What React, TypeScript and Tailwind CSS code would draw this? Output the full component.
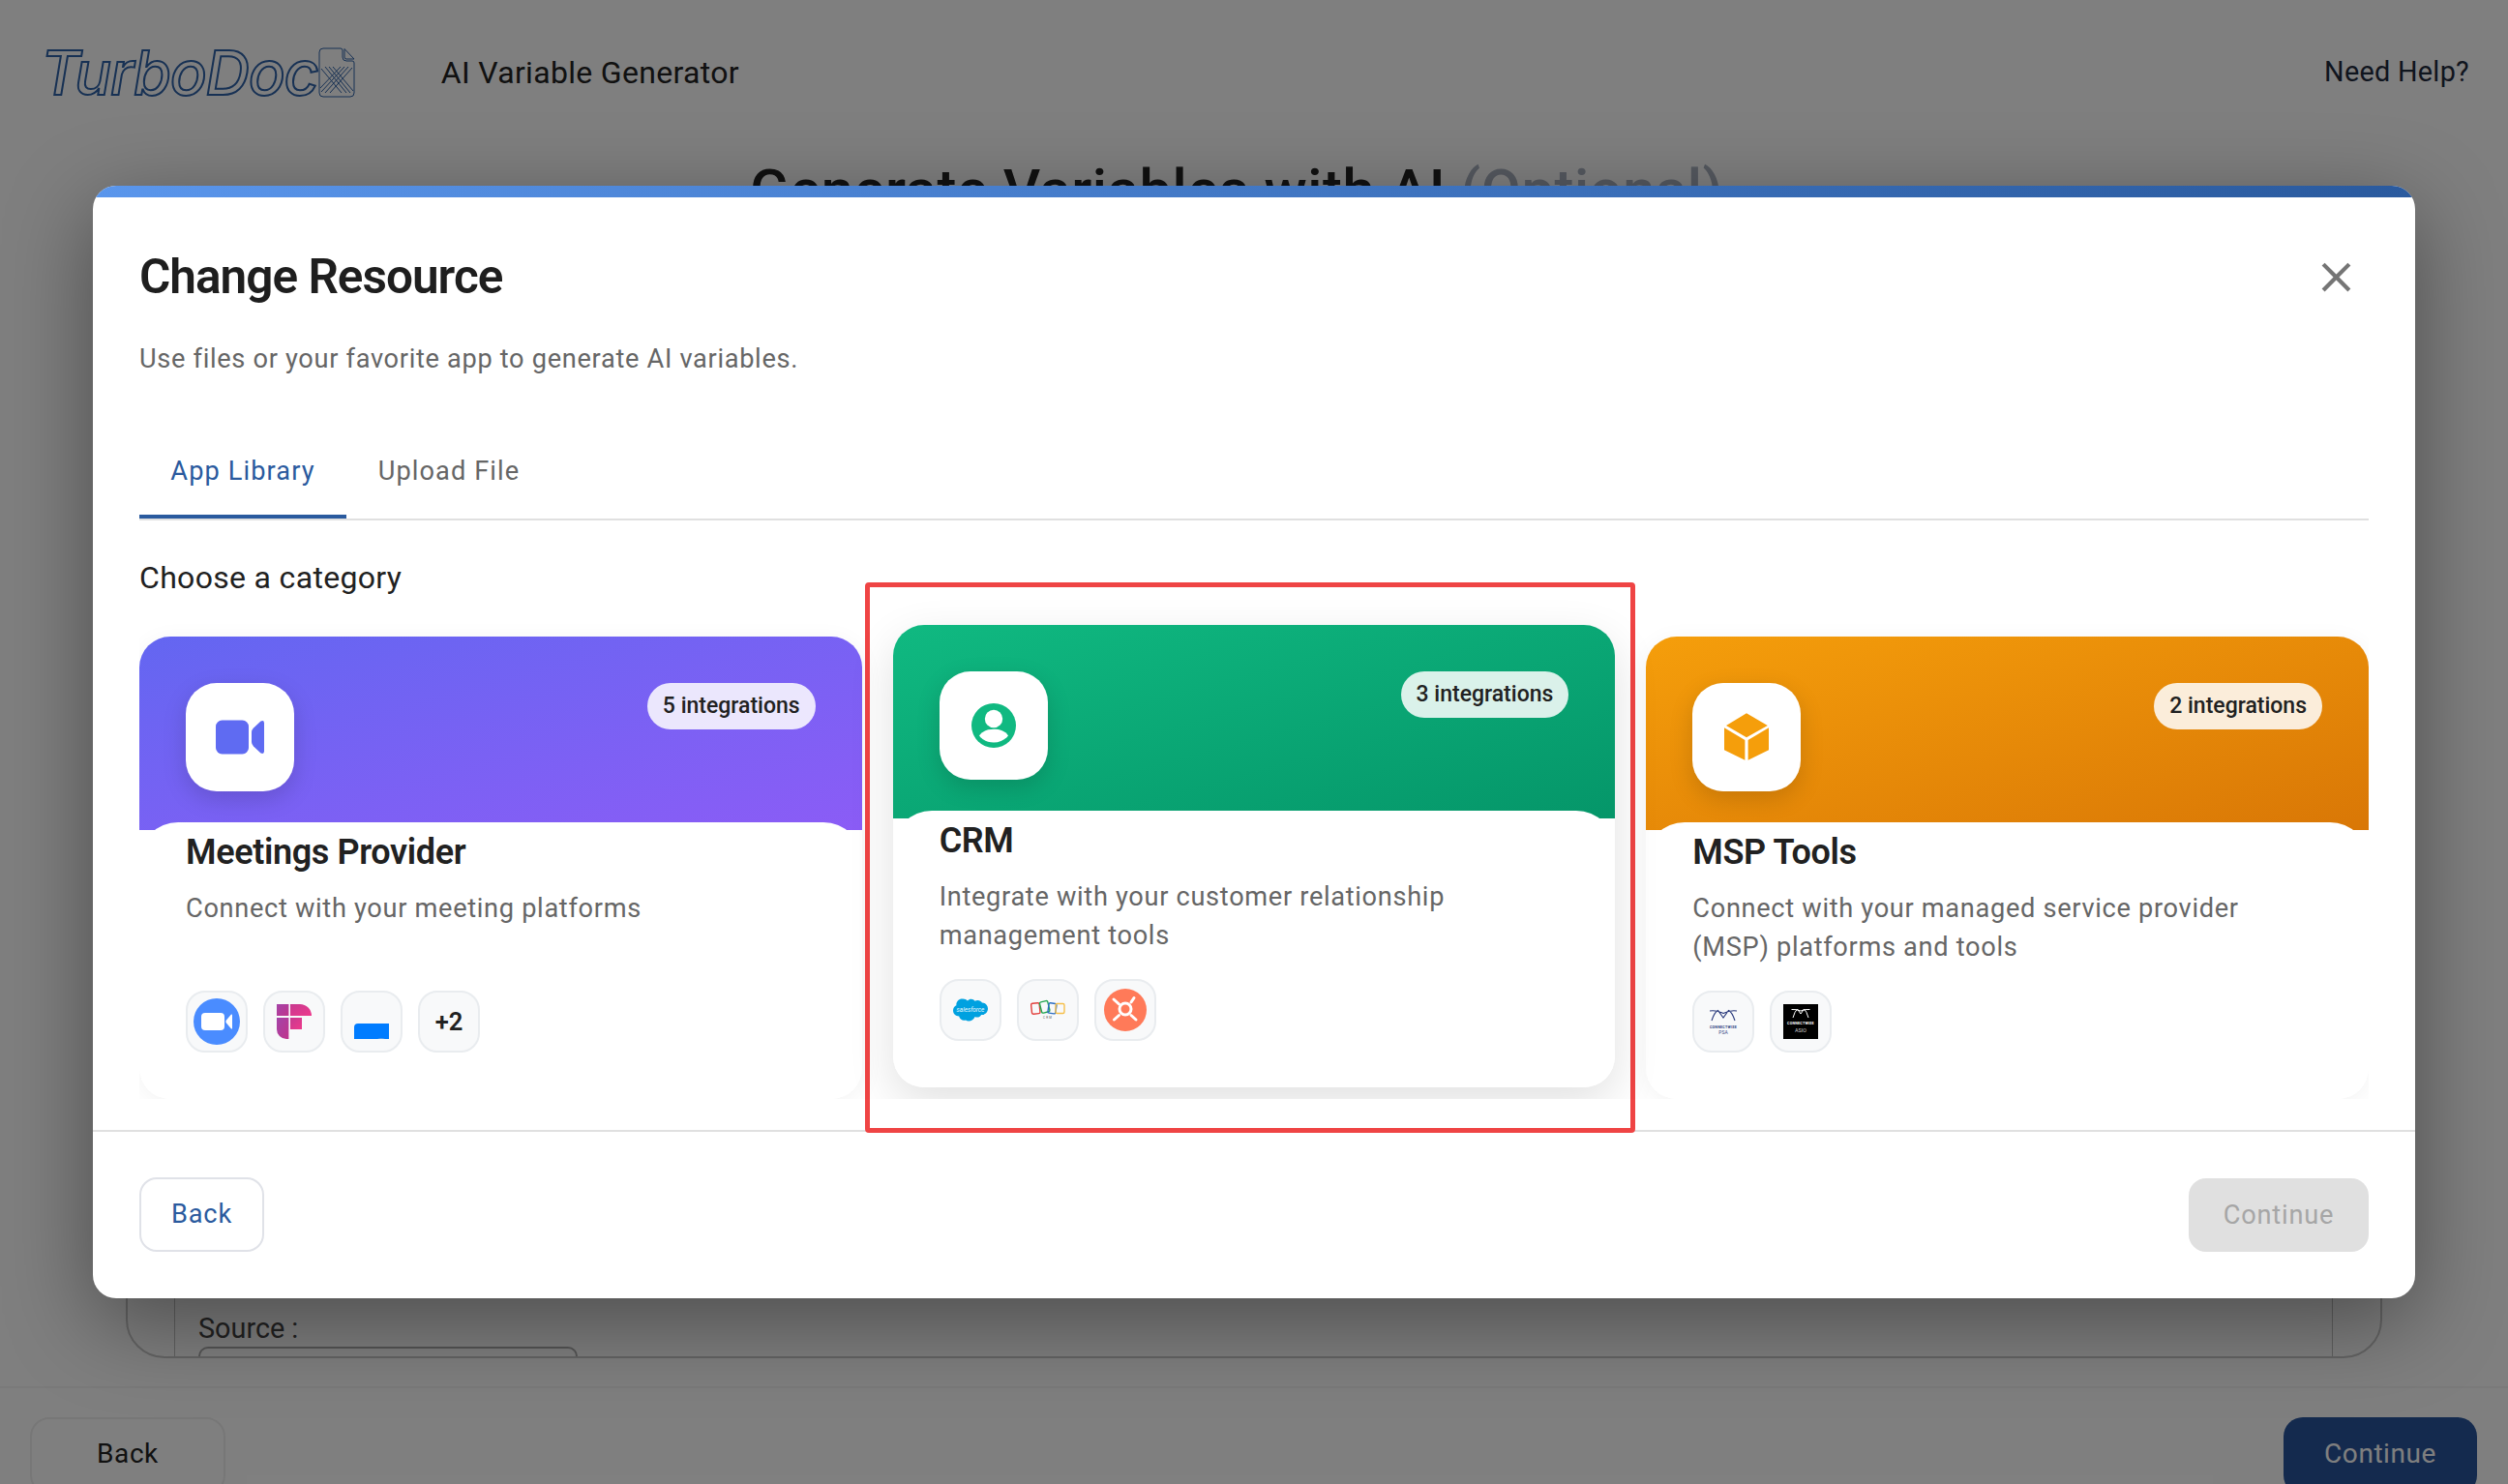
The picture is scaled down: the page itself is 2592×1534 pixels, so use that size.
import React from "react";

function Chip({ children }: { children: React.ReactNode }) {
  return (
    <div className="flex h-16 w-16 shrink-0 items-center justify-center rounded-[20px] border-2 border-[#e9ecef] bg-[#f8f9fa]">
      {children}
    </div>
  );
}

function ZoomLogo() {
  return (
    <svg width="48" height="48" viewBox="0 0 48 48">
      <circle cx="24" cy="24" r="24" fill="#4a8cff" />
      <rect x="8" y="15" width="24" height="18" rx="4" fill="#fff" />
      <path d="M33.5 23 L39 16.5 Q40 16 40 17.5 V30.5 Q40 32 39 31.5 L33.5 25 Z" fill="#fff" />
    </svg>
  );
}

function FirefliesLogo() {
  return (
    <svg width="36" height="36" viewBox="0 0 36 36">
      <defs>
        <linearGradient id="ff1" x1="0" y1="0" x2="1" y2="1">
          <stop offset="0" stopColor="#a444a8" />
          <stop offset="1" stopColor="#c0348c" />
        </linearGradient>
        <linearGradient id="ff2" x1="0" y1="0" x2="1" y2="1">
          <stop offset="0" stopColor="#c73a90" />
          <stop offset="1" stopColor="#ee3a8c" />
        </linearGradient>
      </defs>
      <rect x="0" y="0" width="12.4" height="12" fill="url(#ff1)" />
      <path d="M14 0 H24 A12 12 0 0 1 36 12 H14 Z" fill="url(#ff2)" />
      <path d="M0 14 H12.4 V36 H10 A10 10 0 0 1 0 26 Z" fill="url(#ff1)" />
      <rect x="14" y="14" width="12" height="12" fill="url(#ff2)" />
    </svg>
  );
}

function BlueLogo() {
  return (
    <svg width="36" height="36" viewBox="0 0 36 36">
      <path d="M0 36 V24 Q0 20 4 20 H36 V36 Z" fill="#007cff" />
      <path d="M24 36 Q28 34 32 36 Z" fill="#5a9fe8" />
    </svg>
  );
}

function SalesforceLogo() {
  return (
    <svg width="36" height="36" viewBox="0 0 36 36">
      <path
        d="M15 8.5 C17 6 21 6.2 22.6 8.8 C25 7.2 28.6 8 30 10.4 C33.6 10.6 36 13.4 36 16.6 C36 20.4 33 23.4 29.2 23 C28 25.4 24.8 26.2 22.6 25 C21.4 28.6 16.4 30.8 13 28.6 C10 29.6 6.8 27.6 6.2 24.6 C2.8 24.4 0 22.2 0 18.6 C0 16 1.4 14 3.4 13.2 C3 9.6 6 6.4 9.6 6.6 C11.8 6.4 13.8 7.2 15 8.5 Z"
        fill="#00a1e0"
      />
      <text x="18" y="20" textAnchor="middle" fontSize="6.4" fontStyle="italic" fill="#e8f7fd" fontFamily="Roboto, sans-serif">
        salesforce
      </text>
    </svg>
  );
}

function ZohoLogo() {
  return (
    <svg width="36" height="36" viewBox="0 0 36 36" fill="none">
      <rect x="1" y="11" width="8.5" height="11" rx="1.5" stroke="#e2403c" strokeWidth="1.4" transform="rotate(-6 5 16)" />
      <rect x="10.5" y="9" width="8.5" height="11.5" rx="1.5" stroke="#22a650" strokeWidth="1.4" transform="rotate(-14 15 15)" />
      <rect x="18.5" y="11" width="8" height="10.5" rx="1.5" stroke="#2c6fc4" strokeWidth="1.4" transform="rotate(8 22 16)" />
      <rect x="26" y="11.5" width="9" height="10" rx="1.5" stroke="#f5c04c" strokeWidth="1.4" />
      <text x="18" y="27" textAnchor="middle" fontSize="3" letterSpacing="1.2" fill="#555" fontFamily="Roboto, sans-serif">
        CRM
      </text>
    </svg>
  );
}

function HubspotLogo() {
  return (
    <svg width="44" height="44" viewBox="0 0 44 44">
      <circle cx="22" cy="22" r="22" fill="#ff7a59" />
      <circle cx="22" cy="21" r="6" fill="none" stroke="#fff" strokeWidth="3" />
      <g stroke="#fff" strokeWidth="3" strokeLinecap="round">
        <path d="M10 11 L15.5 16" />
        <path d="M28 14 L31 9.5" />
        <path d="M15.5 27.5 L10.5 32" />
        <path d="M28 27.5 L33 32" />
      </g>
    </svg>
  );
}

function ConnectWisePsa() {
  return (
    <svg width="36" height="36" viewBox="0 0 36 36" fill="none">
      <path d="M6 17 Q9 8 12.5 6.5 L18 14 L23.5 6.5 Q27 8 30 17 M4 7 Q11 6 18 9.5 Q25 6 32 7" stroke="#2a3a7c" strokeWidth="1.1" />
      <text x="18" y="25" textAnchor="middle" fontSize="3.6" fontWeight="700" letterSpacing="0.3" fill="#2a3a7c" fontFamily="Roboto, sans-serif">
        CONNECTWISE
      </text>
      <text x="18" y="30.5" textAnchor="middle" fontSize="5" fill="#3d4c88" fontFamily="Roboto, sans-serif">
        PSA
      </text>
    </svg>
  );
}

function ConnectWiseAsio() {
  return (
    <svg width="36" height="36" viewBox="0 0 36 36" fill="none">
      <rect width="36" height="36" fill="#000" />
      <path d="M10 14 Q12 7 14.5 5 L18 10 L21.5 5 Q24 7 26 14 M8.5 5.5 Q13 5 18 7 Q23 5 27.5 5.5" stroke="#fff" strokeWidth="1" />
      <text x="18" y="20.5" textAnchor="middle" fontSize="3.7" fontWeight="700" letterSpacing="0.2" fill="#fff" fontFamily="Roboto, sans-serif">
        CONNECTWISE
      </text>
      <text x="18" y="29" textAnchor="middle" fontSize="5.4" fill="#d0d0d0" fontFamily="Roboto, sans-serif">
        ASIO
      </text>
    </svg>
  );
}

function VideoIcon() {
  return (
    <svg width="64" height="64" viewBox="0 0 64 64">
      <rect x="7" y="14.5" width="34" height="35" rx="6.5" fill="#5f6bf2" />
      <path d="M44 27 Q44 24.5 46 22.5 L53.5 15.5 Q57 14 57 17.5 V46.5 Q57 50 53.5 48.5 L46 41.5 Q44 39.5 44 37 Z" fill="#5f6bf2" />
    </svg>
  );
}

function UserIcon() {
  return (
    <svg width="64" height="64" viewBox="0 0 64 64">
      <circle cx="32" cy="32" r="23" fill="#10b981" />
      <circle cx="32" cy="25" r="9.2" fill="#fff" />
      <path d="M17 42.5 C20 37.5 26 35.8 32 35.8 C38 35.8 44 37.5 47 42.5 C43.5 47 38 49.5 32 49.5 C26 49.5 20.5 47 17 42.5 Z" fill="#fff" />
    </svg>
  );
}

function BoxIcon() {
  return (
    <svg width="64" height="64" viewBox="0 0 64 64" fill="#f59e0b">
      <path d="M32 7.3 L53.8 20 L32 32.3 L11 20 Z" />
      <path d="M9 22.3 L30.4 35 V55.7 L9 45.3 Z" />
      <path d="M55 22.3 L33.6 35 V55.7 L55 45.3 Z" />
    </svg>
  );
}

type CardProps = {
  gradient: string;
  badgeCount: string;
  icon: React.ReactNode;
  title: string;
  desc: string;
  logos: React.ReactNode;
  lifted?: boolean;
};

function Card({ gradient, badgeCount, icon, title, desc, logos, lifted }: CardProps) {
  return (
    <div
      className={
        lifted
          ? "relative z-10 h-[478px] -translate-y-3 overflow-hidden rounded-[32px] bg-white shadow-[0_16px_48px_rgba(0,0,0,0.12)]"
          : "h-[478px] overflow-hidden rounded-[32px] bg-white shadow-[0_4px_24px_rgba(0,0,0,0.05)]"
      }
    >
      <div className={`flex h-[200px] items-start justify-between px-12 pt-12 ${gradient}`}>
        <div className="flex h-28 w-28 items-center justify-center rounded-[32px] bg-white shadow-[0_8px_24px_rgba(0,0,0,0.15)]">
          {icon}
        </div>
        <div className="flex h-12 items-center rounded-full bg-white/85 px-4 text-[23px] font-medium text-[#212121]">
          {badgeCount} integrations
        </div>
      </div>
      <div className="relative -mt-2 h-[286px] rounded-t-[40px] bg-white px-12 pt-[7px]">
        <div className="h-12 text-[36px] leading-[48px] font-semibold tracking-[-0.01em] text-[#212121]">{title}</div>
        <div className="mt-[14px] h-20 text-[27.2px] leading-10 tracking-[0.025em] text-[#666666]">{desc}</div>
        <div className="mt-[25px] flex gap-4">{logos}</div>
      </div>
    </div>
  );
}

export default function App() {
  return (
    <div className="relative h-[1534px] w-[2592px] overflow-hidden bg-white font-['Roboto',sans-serif]">
      {/* page behind the dialog */}
      <div className="flex h-full flex-col">
        <header className="flex h-[150px] shrink-0 items-center justify-between pr-[40px] pl-[42px]">
          <div className="flex items-center">
            <div className="flex items-center">
              <span className="font-['Inter',sans-serif] text-[63px] leading-none font-medium tracking-[-0.02em] text-transparent italic [-webkit-text-stroke:2px_#2f62a8]">
                TurboDoc
              </span>
              <svg width="38" height="52" viewBox="0 0 38 52" fill="none" stroke="#2f62a8" strokeWidth="1">
                <path d="M5 1 H23 Q25 1 25 3 V10 Q25 14 29 14 H35 Q37 14 37 16 V47 Q37 51 33 51 H5 Q1 51 1 47 V5 Q1 1 5 1 Z" />
                <path d="M27 1.5 L37 12 H29 Q27 12 27 10 Z" />
                <g strokeWidth="1">
                  <path d="M7 20 L29 47 M11 20 L33 47 M15 20 L36 45 M3 22 L24 47" />
                  <path d="M31 20 L7 47 M27 20 L3 46 M35 21 L12 47 M23 20 L2 42" />
                </g>
              </svg>
            </div>
            <span className="ml-[89px] text-[32px] tracking-[0.01em] text-[#222]">AI Variable Generator</span>
          </div>
          <span className="text-[28.8px] tracking-[0.01em] text-[#1f2a3c]">Need Help?</span>
        </header>
        <h1 className="mt-[12px] shrink-0 pr-[36px] text-center text-[59.6px] leading-[70px] font-medium tracking-[0.01em] text-[#222]">
          Generate Variables with AI <span className="text-[#aab2c0]">(Optional)</span>
        </h1>
        <div className="mx-[130px] mt-[16px] flex h-[1156px] shrink-0 overflow-hidden rounded-b-[40px] border-2 border-[#c8c8c8]">
          <div className="w-[49px] shrink-0 border-r border-[#c0c0c0]" />
          <div className="flex flex-1 flex-col justify-end pl-6">
            <div className="text-[28.8px] leading-8 text-[#444]">Source :</div>
            <div className="mt-[3px] h-[10px] w-[392px] rounded-t-[16px] border-2 border-b-0 border-[#aaa]" />
          </div>
          <div className="w-[50px] shrink-0 border-l border-[#c0c0c0]" />
        </div>
        <footer className="mt-[29px] flex h-[112px] shrink-0 items-start justify-between border-t-2 border-[#f4f4f4] pt-[30px] pr-8 pl-[31px]">
          <div className="flex h-20 w-[202px] shrink-0 items-center justify-center rounded-[20px] border-2 border-[#eeeeee] pb-1 text-[28px] tracking-[0.02em] text-[#222]">
            Back
          </div>
          <div className="flex h-20 w-[200px] shrink-0 items-center justify-center rounded-[20px] bg-[#28549c] pb-1 text-[28px] tracking-[0.02em] text-white">
            Continue
          </div>
        </footer>
      </div>

      {/* dialog overlay */}
      <div className="absolute inset-0 flex items-center justify-center bg-black/50">
        <div className="relative flex h-[1150px] w-[2400px] flex-col overflow-hidden rounded-3xl bg-white shadow-[0_24px_90px_rgba(0,0,0,0.4)]">
          <div className="h-3 shrink-0 bg-gradient-to-r from-[#5a96ec] to-[#2a5a9e]" />
          <div className="flex flex-1 flex-col px-12">
            <div className="mt-[57px] flex h-[50px] items-center justify-between">
              <h2 className="text-[49.5px] leading-[50px] font-semibold tracking-[-0.02em] text-[#1e1e1e]">Change Resource</h2>
              <svg width="51" height="51" viewBox="0 0 24 24" fill="#757575" className="mr-[8px]">
                <path d="M19 6.41 17.59 5 12 10.59 6.41 5 5 6.41 10.59 12 5 17.59 6.41 19 12 13.41 17.59 19 19 17.59 13.41 12z" />
              </svg>
            </div>
            <p className="mt-[40px] text-[27.2px] leading-10 tracking-[0.025em] text-[#666666]">
              Use files or your favorite app to generate AI variables.
            </p>
            <div className="mt-[49px] flex h-[98px] border-b-2 border-[#e0e0e0]">
              <div className="flex h-[96px] w-[214px] items-center justify-center border-b-4 border-[#2a5a9e] pt-[3px] text-[27.2px] tracking-[0.04em] text-[#2a5a9e]">
                App Library
              </div>
              <div className="flex h-[92px] w-[212px] items-center justify-center pt-[3px] text-[27.2px] tracking-[0.04em] text-[#666666]">
                Upload File
              </div>
            </div>
            <div className="mt-[39px] text-[32px] leading-10 tracking-[0.01em] text-[#212121]">Choose a category</div>
            <div className="mt-[2px] h-[517px] overflow-hidden">
              <div className="grid grid-cols-3 gap-8 pt-[39px]">
                <Card
                  gradient="bg-gradient-to-br from-[#6366f1] to-[#8b5cf6]"
                  badgeCount="5"
                  icon={<VideoIcon />}
                  title="Meetings Provider"
                  desc="Connect with your meeting platforms"
                  logos={
                    <>
                      <Chip><ZoomLogo /></Chip>
                      <Chip><FirefliesLogo /></Chip>
                      <Chip><BlueLogo /></Chip>
                      <Chip><span className="text-[25.6px] font-semibold text-[#212121]">+2</span></Chip>
                    </>
                  }
                />
                <Card
                  lifted
                  gradient="bg-gradient-to-br from-[#10b981] to-[#059669]"
                  badgeCount="3"
                  icon={<UserIcon />}
                  title="CRM"
                  desc="Integrate with your customer relationship management tools"
                  logos={
                    <>
                      <Chip><SalesforceLogo /></Chip>
                      <Chip><ZohoLogo /></Chip>
                      <Chip><HubspotLogo /></Chip>
                    </>
                  }
                />
                <Card
                  gradient="bg-gradient-to-br from-[#f59e0b] to-[#d97706]"
                  badgeCount="2"
                  icon={<BoxIcon />}
                  title="MSP Tools"
                  desc="Connect with your managed service provider (MSP) platforms and tools"
                  logos={
                    <>
                      <Chip><ConnectWisePsa /></Chip>
                      <Chip><ConnectWiseAsio /></Chip>
                    </>
                  }
                />
              </div>
            </div>
          </div>
          <div className="flex h-[174px] shrink-0 items-start justify-between border-t-2 border-[#e0e0e0] px-12 pt-[47px]">
            <div className="flex h-[77px] w-[129px] items-center justify-center rounded-[18px] border-2 border-[#e0e2e8] bg-white text-[27.2px] tracking-[0.03em] text-[#2a5a9e]">
              Back
            </div>
            <div className="mt-px flex h-[76px] w-[186px] items-center justify-center rounded-[18px] bg-[#e0e0e0] text-[27.2px] tracking-[0.03em] text-[#a6a6a6]">
              Continue
            </div>
          </div>
          {/* red annotation frame */}
          <div className="absolute top-[410px] left-[798px] h-[569px] w-[796px] rounded-[4px] border-[5px] border-[#ef4444]" />
        </div>
      </div>
    </div>
  );
}
